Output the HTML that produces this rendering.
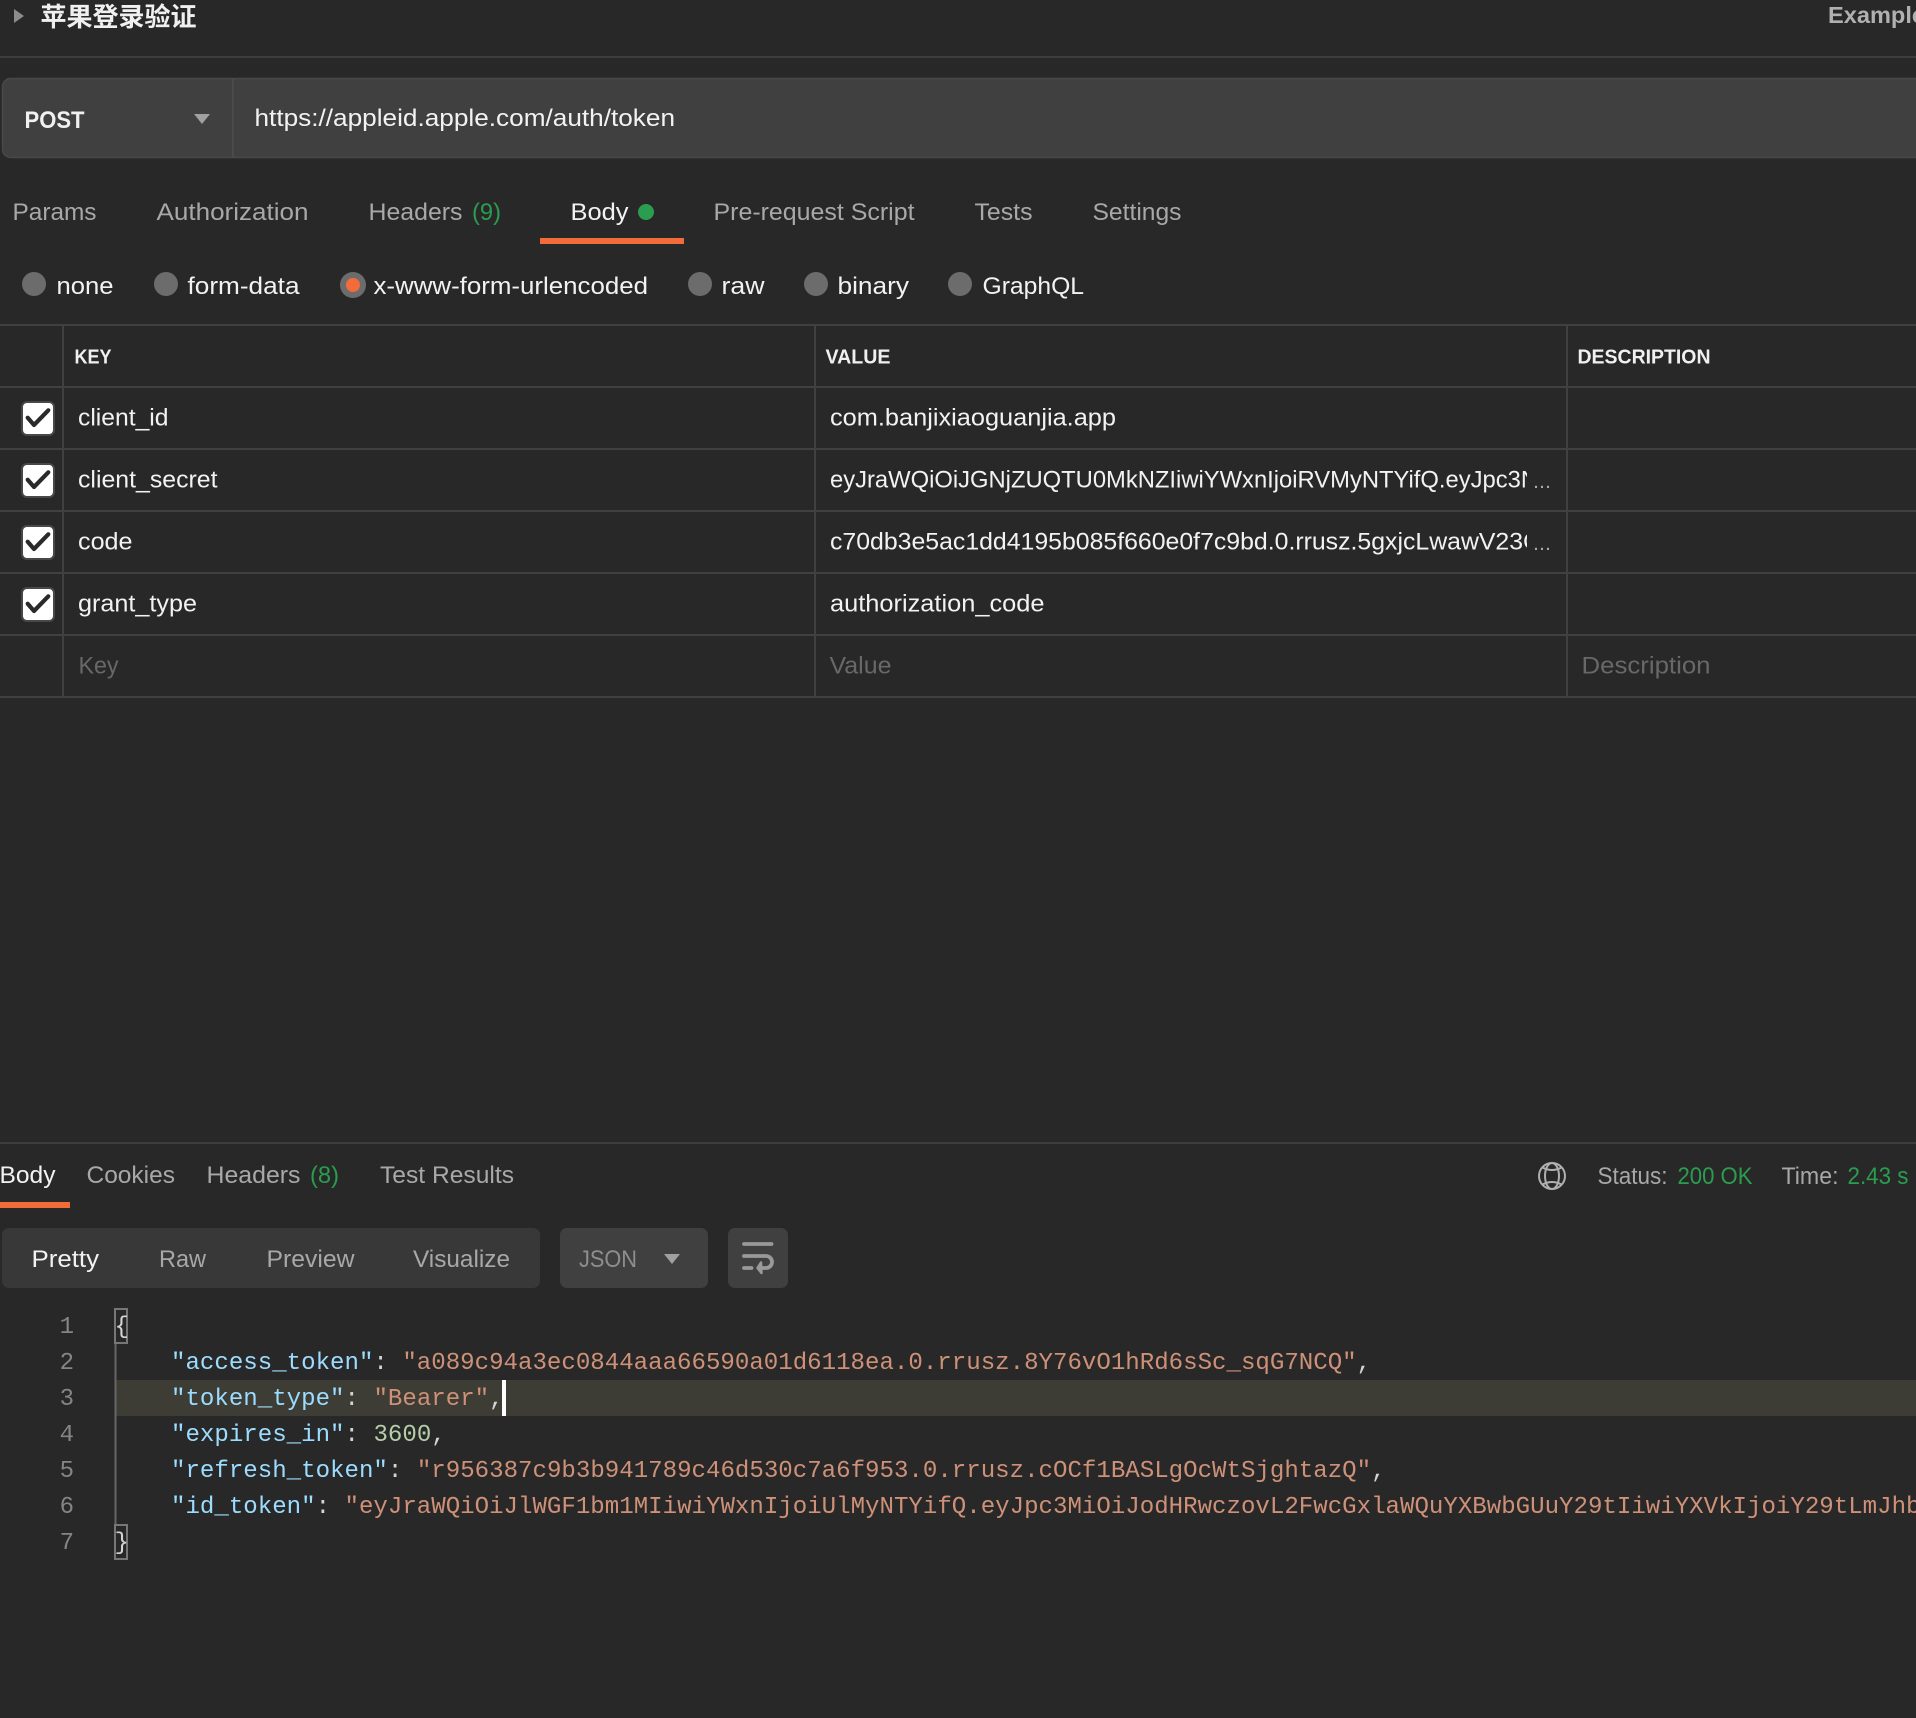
<!DOCTYPE html>
<html lang="zh">
<head>
<meta charset="utf-8">
<title>苹果登录验证</title>
<style>
html,body{margin:0;padding:0;background:#282828;width:1916px;height:1718px;overflow:hidden}
svg{display:block}
text{font-family:"Liberation Sans","Noto Sans CJK SC",sans-serif;font-size:24px;white-space:pre}
.w{fill:#f2f2f2}
.g{fill:#a8a8a8}
.d{fill:#686868}
.gr{fill:#2a9d4f}
.b{font-weight:700;font-size:20px;fill:#f0f0f0}
.m{font-family:"Liberation Mono",monospace;font-size:24.1px;fill:#d4d4d4}
.k{fill:#9cdcfe}.s{fill:#ce9178}.n{fill:#b5cea8}
.ln{font-family:"Liberation Mono",monospace;font-size:24px;fill:#858585;text-anchor:end}
</style>
</head>
<body>
<svg xmlns="http://www.w3.org/2000/svg" width="1916" height="1718" viewBox="0 0 1916 1718">
<defs>
<clipPath id="v"><rect x="825" y="440" width="702" height="140"/></clipPath>
<g id="cb">
<rect x="22" y="402" width="32" height="33" rx="5" fill="#fff" stroke="#484848" stroke-width="2"/>
<path d="M27.700 417.700L34 425L48.300 410.300" fill="none" stroke="#2a2a2a" stroke-width="4.200" stroke-linecap="round" stroke-linejoin="round"/>
</g>
</defs>
<rect width="1916" height="1718" fill="#282828"/>

<!-- header -->
<path d="M14 9L24 16L14 23Z" fill="#8c8c8c"/>
<text x="40.500" y="26" style="font-size:26px;font-weight:700" fill="#f0f0f0" textLength="156" lengthAdjust="spacingAndGlyphs">苹果登录验证</text>
<text x="1828" y="23" style="font-size:23px;font-weight:700" fill="#b0b0b0" textLength="97" lengthAdjust="spacingAndGlyphs">Example</text>
<rect x="0" y="56" width="1916" height="2" fill="#3d3d3d"/>

<!-- url bar -->
<path d="M1930 78.500H10.500a8 8 0 0 0-8 8v63a8 8 0 0 0 8 8H1930Z" fill="#404040" stroke="#484848" stroke-width="1.500"/>
<rect x="232" y="79" width="2" height="78" fill="#4a4a4a"/>
<text x="24.500" y="128" style="font-size:24px;font-weight:700" fill="#f0f0f0" textLength="60" lengthAdjust="spacingAndGlyphs">POST</text>
<path d="M194 114H210L202 124Z" fill="#a0a0a0"/>
<text x="254.500" y="126" class="w" textLength="420.500" lengthAdjust="spacingAndGlyphs">https://appleid.apple.com/auth/token</text>

<!-- request tabs -->
<text x="12.500" y="220" class="g" textLength="84" lengthAdjust="spacingAndGlyphs">Params</text>
<text x="156.500" y="220" class="g" textLength="152" lengthAdjust="spacingAndGlyphs">Authorization</text>
<text x="368.500" y="220" class="g" textLength="94" lengthAdjust="spacingAndGlyphs">Headers</text>
<text x="472" y="220" class="gr" textLength="29" lengthAdjust="spacingAndGlyphs">(9)</text>
<text x="570.500" y="220" class="w" textLength="58" lengthAdjust="spacingAndGlyphs">Body</text>
<circle cx="646" cy="212" r="8" fill="#2a9d4f"/>
<rect x="540" y="238" width="144" height="6" fill="#f26b3a"/>
<text x="713.500" y="220" class="g" textLength="201" lengthAdjust="spacingAndGlyphs">Pre-request Script</text>
<text x="974.500" y="220" class="g" textLength="58" lengthAdjust="spacingAndGlyphs">Tests</text>
<text x="1092.500" y="220" class="g" textLength="89" lengthAdjust="spacingAndGlyphs">Settings</text>

<!-- body type radios -->
<circle cx="34" cy="284" r="12" fill="#6c6c6c"/>
<text x="56.500" y="294" class="w" textLength="57" lengthAdjust="spacingAndGlyphs">none</text>
<circle cx="166" cy="284" r="12" fill="#6c6c6c"/>
<text x="187.500" y="294" class="w" textLength="112" lengthAdjust="spacingAndGlyphs">form-data</text>
<circle cx="353" cy="285" r="13" fill="#6c6c6c"/>
<circle cx="353" cy="285" r="7" fill="#f26b3a"/>
<text x="373.500" y="294" class="w" textLength="274.500" lengthAdjust="spacingAndGlyphs">x-www-form-urlencoded</text>
<circle cx="700" cy="284" r="12" fill="#6c6c6c"/>
<text x="721.500" y="294" class="w" textLength="43" lengthAdjust="spacingAndGlyphs">raw</text>
<circle cx="816" cy="284" r="12" fill="#6c6c6c"/>
<text x="837.500" y="294" class="w" textLength="71.500" lengthAdjust="spacingAndGlyphs">binary</text>
<circle cx="960" cy="284" r="12" fill="#6c6c6c"/>
<text x="982.500" y="294" class="w" textLength="101.500" lengthAdjust="spacingAndGlyphs">GraphQL</text>

<!-- table -->
<g fill="#404040">
<rect x="0" y="324" width="1916" height="2"/>
<rect x="0" y="386" width="1916" height="2"/>
<rect x="0" y="448" width="1916" height="2"/>
<rect x="0" y="510" width="1916" height="2"/>
<rect x="0" y="572" width="1916" height="2"/>
<rect x="0" y="634" width="1916" height="2"/>
<rect x="0" y="696" width="1916" height="2"/>
<rect x="62" y="326" width="2" height="370"/>
<rect x="814" y="326" width="2" height="370"/>
<rect x="1566" y="326" width="2" height="370"/>
</g>
<text x="74.500" y="363.500" class="b" textLength="37" lengthAdjust="spacingAndGlyphs">KEY</text>
<text x="825.500" y="363.500" class="b" textLength="65" lengthAdjust="spacingAndGlyphs">VALUE</text>
<text x="1577.500" y="363.500" class="b" textLength="133" lengthAdjust="spacingAndGlyphs">DESCRIPTION</text>

<use href="#cb"/>
<use href="#cb" y="62"/>
<use href="#cb" y="124"/>
<use href="#cb" y="186"/>

<text x="78" y="425.500" class="w" textLength="90.500" lengthAdjust="spacingAndGlyphs">client_id</text>
<text x="78" y="487.500" class="w" textLength="139.500" lengthAdjust="spacingAndGlyphs">client_secret</text>
<text x="78" y="549.500" class="w" textLength="54.500" lengthAdjust="spacingAndGlyphs">code</text>
<text x="78" y="611.500" class="w" textLength="119" lengthAdjust="spacingAndGlyphs">grant_type</text>
<text x="78.500" y="673.500" class="d" textLength="40" lengthAdjust="spacingAndGlyphs">Key</text>

<text x="830" y="425.500" class="w" textLength="286" lengthAdjust="spacingAndGlyphs">com.banjixiaoguanjia.app</text>
<g clip-path="url(#v)">
<text x="830" y="487.500" class="w" textLength="708" lengthAdjust="spacingAndGlyphs">eyJraWQiOiJGNjZUQTU0MkNZIiwiYWxnIjoiRVMyNTYifQ.eyJpc3N</text>
<text x="830" y="549.500" class="w" textLength="711" lengthAdjust="spacingAndGlyphs">c70db3e5ac1dd4195b085f660e0f7c9bd.0.rrusz.5gxjcLwawV23C</text>
</g>
<text x="1533" y="488" class="g" style="font-size:20px" textLength="18" lengthAdjust="spacingAndGlyphs">...</text>
<text x="1533" y="550" class="g" style="font-size:20px" textLength="18" lengthAdjust="spacingAndGlyphs">...</text>
<text x="830" y="611.500" class="w" textLength="214.500" lengthAdjust="spacingAndGlyphs">authorization_code</text>
<text x="829.500" y="673.500" class="d" textLength="62" lengthAdjust="spacingAndGlyphs">Value</text>
<text x="1581.500" y="673.500" class="d" textLength="129" lengthAdjust="spacingAndGlyphs">Description</text>

<!-- response -->
<rect x="0" y="1142" width="1916" height="2" fill="#3d3d3d"/>
<text x="-0.500" y="1183" class="w" textLength="56" lengthAdjust="spacingAndGlyphs">Body</text>
<rect x="0" y="1202" width="70" height="6" fill="#f26b3a"/>
<text x="86.500" y="1183" class="g" textLength="88.500" lengthAdjust="spacingAndGlyphs">Cookies</text>
<text x="206.500" y="1183" class="g" textLength="94" lengthAdjust="spacingAndGlyphs">Headers</text>
<text x="310" y="1183" class="gr" textLength="29" lengthAdjust="spacingAndGlyphs">(8)</text>
<text x="380" y="1183" class="g" textLength="134" lengthAdjust="spacingAndGlyphs">Test Results</text>

<g fill="none" stroke="#b0b0b0" stroke-width="2">
<circle cx="1552" cy="1176" r="13"/>
<ellipse cx="1552" cy="1176" rx="7" ry="13"/>
<path d="M1542.500 1167.500Q1552 1172.500 1561.500 1167.500M1542.500 1184.500Q1552 1179.500 1561.500 1184.500"/>
</g>
<text x="1597.500" y="1184" class="g" textLength="70" lengthAdjust="spacingAndGlyphs">Status:</text>
<text x="1677.500" y="1184" class="gr" textLength="75" lengthAdjust="spacingAndGlyphs">200 OK</text>
<text x="1781.500" y="1184" class="g" textLength="57" lengthAdjust="spacingAndGlyphs">Time:</text>
<text x="1847.500" y="1184" class="gr" textLength="61" lengthAdjust="spacingAndGlyphs">2.43 s</text>

<!-- view controls -->
<rect x="2" y="1228" width="538" height="60" rx="7" fill="#383838"/>
<rect x="560" y="1228" width="148" height="60" rx="7" fill="#404040"/>
<rect x="728" y="1228" width="60" height="60" rx="7" fill="#404040"/>
<text x="31.500" y="1267" class="w" textLength="67.500" lengthAdjust="spacingAndGlyphs">Pretty</text>
<text x="159" y="1267" class="g" textLength="47" lengthAdjust="spacingAndGlyphs">Raw</text>
<text x="266.500" y="1267" class="g" textLength="88" lengthAdjust="spacingAndGlyphs">Preview</text>
<text x="413" y="1267" class="g" textLength="97" lengthAdjust="spacingAndGlyphs">Visualize</text>
<text x="579" y="1267" fill="#8e8e8e" textLength="58" lengthAdjust="spacingAndGlyphs">JSON</text>
<path d="M664 1254H680L672 1264Z" fill="#a0a0a0"/>
<g fill="none" stroke="#999" stroke-linecap="round" stroke-linejoin="round">
<path d="M744 1244H771.500" stroke-width="3.800"/>
<path d="M744 1256H766a6 6 0 0 1 0 12H759" stroke-width="3.800"/>
<path d="M744 1268H751.500" stroke-width="3.800"/>
<path d="M761 1262.500L757.500 1268L761.500 1273Z" fill="#999" stroke-width="2.500"/>
</g>

<!-- code -->
<rect x="116" y="1380" width="1800" height="36" fill="#3d3d35"/>
<rect x="114.500" y="1343" width="2" height="181" fill="#666"/>
<rect x="115" y="1309" width="12" height="34" fill="none" stroke="#777" stroke-width="2"/>
<rect x="115" y="1525" width="12" height="34" fill="none" stroke="#777" stroke-width="2"/>
<rect x="502" y="1380" width="4" height="36" fill="#fff"/>

<text x="74" y="1333" class="ln">1</text>
<text x="74" y="1369" class="ln">2</text>
<text x="74" y="1405" class="ln">3</text>
<text x="74" y="1441" class="ln">4</text>
<text x="74" y="1477" class="ln">5</text>
<text x="74" y="1513" class="ln">6</text>
<text x="74" y="1549" class="ln">7</text>

<text x="114.500" y="1333" class="m">{</text>
<text x="171" y="1369" class="m"><tspan class="k">"access_token"</tspan>: <tspan class="s">"a089c94a3ec0844aaa66590a01d6118ea.0.rrusz.8Y76vO1hRd6sSc_sqG7NCQ"</tspan>,</text>
<text x="171" y="1405" class="m"><tspan class="k">"token_type"</tspan>: <tspan class="s">"Bearer"</tspan>,</text>
<text x="171" y="1441" class="m"><tspan class="k">"expires_in"</tspan>: <tspan class="n">3600</tspan>,</text>
<text x="171" y="1477" class="m"><tspan class="k">"refresh_token"</tspan>: <tspan class="s">"r956387c9b3b941789c46d530c7a6f953.0.rrusz.cOCf1BASLgOcWtSjghtazQ"</tspan>,</text>
<text x="171" y="1513" class="m"><tspan class="k">"id_token"</tspan>: <tspan class="s">"eyJraWQiOiJlWGF1bm1MIiwiYWxnIjoiUlMyNTYifQ.eyJpc3MiOiJodHRwczovL2FwcGxlaWQuYXBwbGUuY29tIiwiYXVkIjoiY29tLmJhb</tspan></text>
<text x="114.500" y="1549" class="m">}</text>
</svg>
</body>
</html>
